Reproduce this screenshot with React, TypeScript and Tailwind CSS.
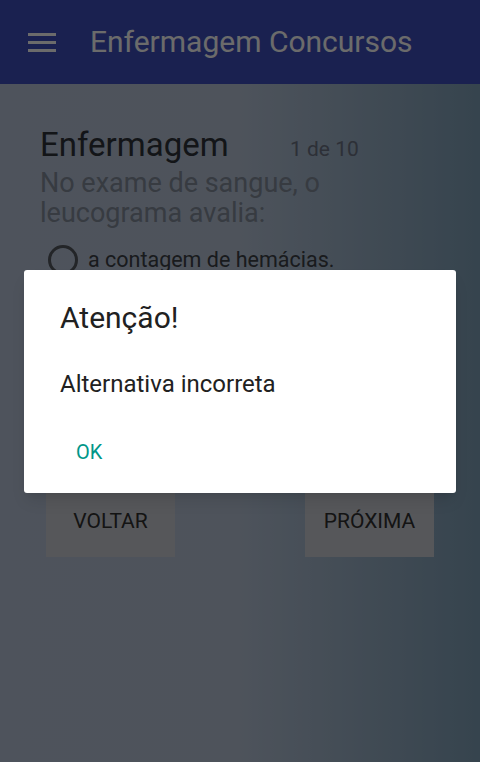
import React from 'react';

const MenuIcon = () => (
  <svg width="28" height="19" viewBox="0 0 28 19" className="block">
    <rect x="0" y="0" width="28" height="3" fill="#ffffff" />
    <rect x="0" y="8" width="28" height="3" fill="#ffffff" />
    <rect x="0" y="16" width="28" height="3" fill="#ffffff" />
  </svg>
);

const AlertDialog = ({ title, message, onOk }: { title: string; message: string; onOk?: () => void }) => (
  <div className="absolute inset-0 bg-black/[0.58] flex items-center justify-center">
    <div className="w-[432px] h-[223px] bg-white rounded-[3px] pl-[36px] pt-[32px] shadow-lg">
      <h2 className="text-[30px] leading-[32px] text-[#212121]">{title}</h2>
      <p className="mt-[37px] text-[24px] leading-[26px] text-[#212121]">{message}</p>
      <button
        onClick={onOk}
        className="mt-[43px] ml-[16px] text-[20px] leading-[24px] text-[#009688] uppercase"
      >
        OK
      </button>
    </div>
  </div>
);

export default function App() {
  return (
    <div
      className="relative w-[480px] h-[762px] overflow-hidden flex flex-col"
      style={{ fontFamily: 'Roboto, "Noto Sans", sans-serif' }}
    >
      <header className="h-[84px] shrink-0 bg-[#3e4fbe] flex items-center">
        <div className="ml-[28px]">
          <MenuIcon />
        </div>
        <h1 className="ml-[34px] text-[30px] leading-[36px] text-white">Enfermagem Concursos</h1>
      </header>

      <main className="flex-1 bg-[linear-gradient(to_right,#bac6db_0%,#b9c6da_50%,#81a2ba_100%)] px-[40px] pt-[42px]">
        <div className="flex items-baseline">
          <h2 className="w-[250px] text-[33px] leading-[38px] text-[#2f3339]">Enfermagem</h2>
          <span className="text-[21px] text-[#6b7283]">1 de 10</span>
        </div>
        <p className="mt-[2px] text-[27px] leading-[30px] text-[#838c9b]">
          No exame de sangue, o
          <br />
          leucograma avalia:
        </p>
        <label className="mt-[16px] ml-[8px] flex items-center gap-[10px]">
          <span className="w-[30px] h-[30px] rounded-full border-[3px] border-[#54585f]" />
          <span className="text-[21.5px] text-[#3c4047]">a contagem de hemácias.</span>
        </label>

        <div className="mt-[211px] mx-[6px] flex justify-between">
          <button className="w-[129px] h-[70px] bg-[#cdcfd6] text-[21px] text-[#303030] uppercase">Voltar</button>
          <button className="w-[129px] h-[70px] bg-[#cdcfd6] text-[21px] text-[#303030] uppercase">Próxima</button>
        </div>
      </main>

      <AlertDialog title="Atenção!" message="Alternativa incorreta" />
    </div>
  );
}
